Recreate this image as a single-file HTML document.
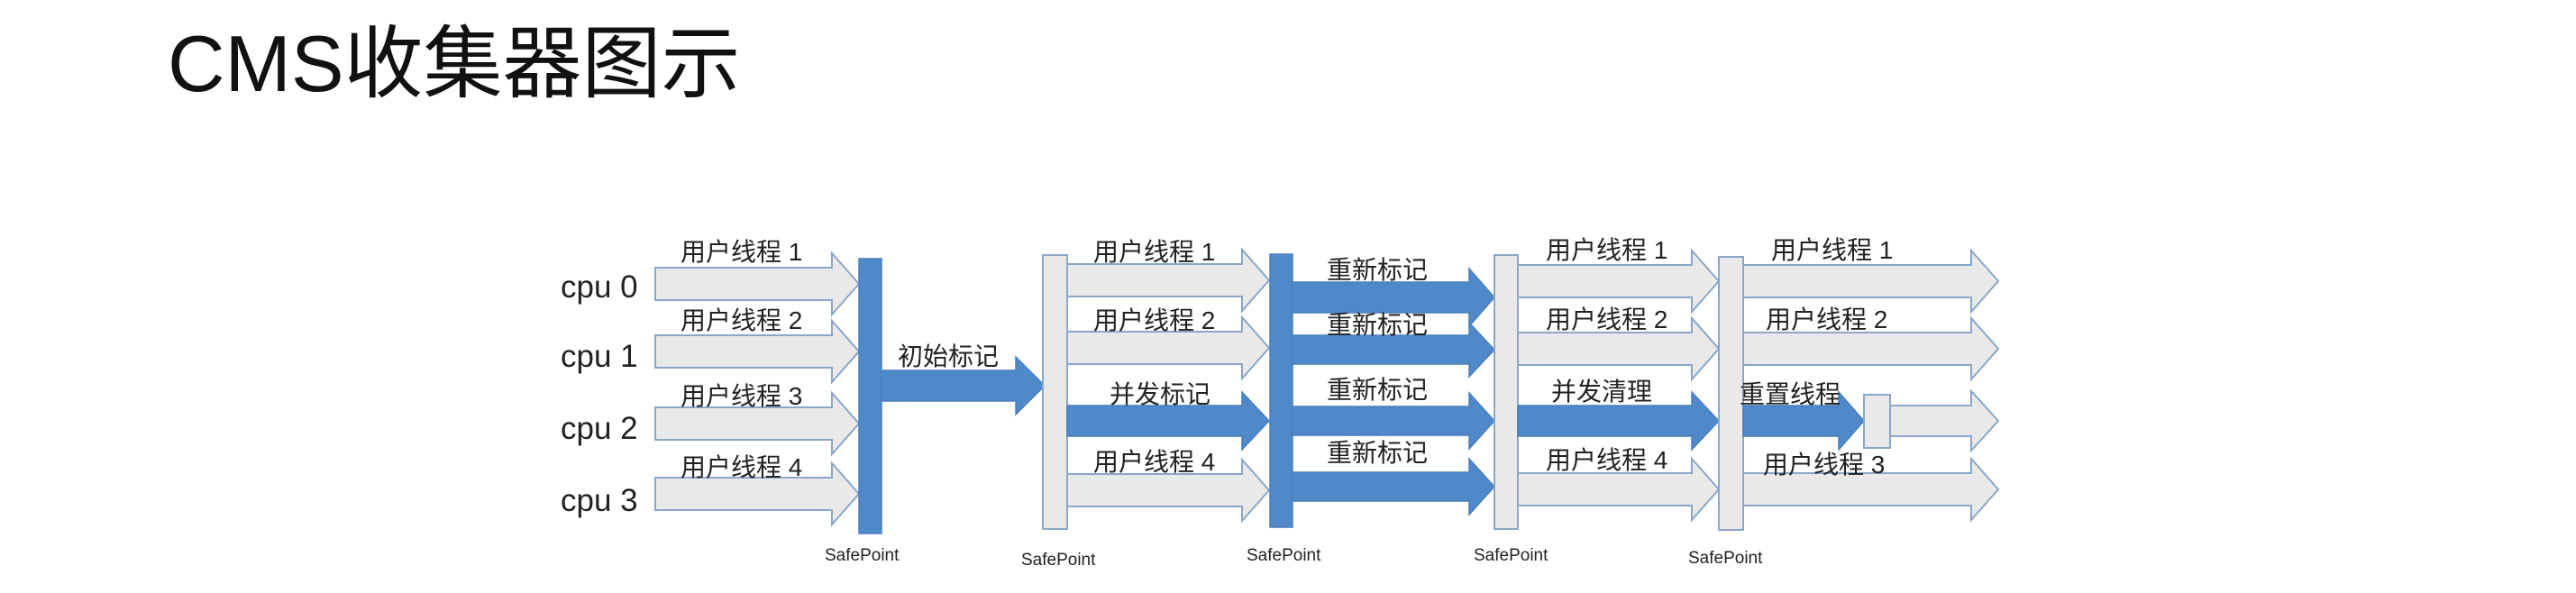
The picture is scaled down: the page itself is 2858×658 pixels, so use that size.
<!DOCTYPE html>
<html><head><meta charset="utf-8"><style>
html,body{margin:0;padding:0;background:#fff;width:2858px;height:658px;overflow:hidden}
svg{display:block}
text{font-family:"Liberation Sans","Noto Sans CJK SC",sans-serif;fill:#222}
</style></head><body>
<svg width="2858" height="658" viewBox="0 0 2858 658" xmlns="http://www.w3.org/2000/svg">
<defs><style>
.g{fill:#e9e9e9;stroke:#8aa6c8;stroke-width:2}
.b{fill:#5089c9;stroke:#4a7fbd;stroke-width:1.5}
.l{font-size:28px}
.s{font-size:19px}
.c{font-size:35px}
</style></defs>
<text x="186" y="101" style="font-size:88px;fill:#111">CMS收集器图示</text>

<text class="c" x="622" y="330">cpu 0</text>
<text class="c" x="622" y="407">cpu 1</text>
<text class="c" x="622" y="487">cpu 2</text>
<text class="c" x="622" y="567">cpu 3</text>

<!-- col1 -->
<polygon class="g" points="727,297 923,297 923,281 953,315 923,349 923,333 727,333"/>
<polygon class="g" points="727,372 923,372 923,356 953,390 923,424 923,408 727,408"/>
<polygon class="g" points="727,452 923,452 923,436 953,470 923,504 923,488 727,488"/>
<polygon class="g" points="727,530 923,530 923,514 953,548 923,582 923,566 727,566"/>
<text class="l" x="755" y="289">用户线程 1</text>
<text class="l" x="755" y="365">用户线程 2</text>
<text class="l" x="755" y="449">用户线程 3</text>
<text class="l" x="755" y="528">用户线程 4</text>
<rect class="b" x="953" y="287" width="25" height="305"/>

<!-- init -->
<polygon class="b" points="978,411 1127,411 1127,396 1159,428 1127,460 1127,445 978,445"/>
<text class="l" x="996" y="405">初始标记</text>
<rect class="g" x="1157" y="283" width="27" height="304"/>

<!-- col2 -->
<polygon class="g" points="1184,293 1378,293 1378,277 1408,311 1378,345 1378,329 1184,329"/>
<polygon class="g" points="1184,368 1378,368 1378,352 1408,386 1378,420 1378,404 1184,404"/>
<polygon class="b" points="1184,450 1378,450 1378,435 1408,467 1378,499 1378,484 1184,484"/>
<polygon class="g" points="1184,526 1378,526 1378,510 1408,544 1378,578 1378,562 1184,562"/>
<text class="l" x="1213" y="289">用户线程 1</text>
<text class="l" x="1213" y="365">用户线程 2</text>
<text class="l" x="1231" y="447">并发标记</text>
<text class="l" x="1213" y="522">用户线程 4</text>
<rect class="b" x="1409" y="282" width="25" height="303"/>

<!-- col3 -->
<polygon class="b" points="1434,313 1630,313 1630,298 1658,330 1630,362 1630,347 1434,347"/>
<polygon class="b" points="1434,372 1630,372 1630,358 1658,388 1630,418 1630,404 1434,404"/>
<polygon class="b" points="1434,451 1630,451 1630,436 1658,467 1630,498 1630,483 1434,483"/>
<polygon class="b" points="1434,524 1630,524 1630,509 1658,540 1630,571 1630,556 1434,556"/>
<text class="l" x="1472" y="309">重新标记</text>
<text class="l" x="1472" y="370">重新标记</text>
<text class="l" x="1472" y="442">重新标记</text>
<text class="l" x="1472" y="512">重新标记</text>
<rect class="g" x="1658" y="283" width="26" height="304"/>

<!-- col4 -->
<polygon class="g" points="1684,294 1877,294 1877,278 1907,312 1877,346 1877,330 1684,330"/>
<polygon class="g" points="1684,369 1877,369 1877,353 1907,387 1877,421 1877,405 1684,405"/>
<polygon class="b" points="1684,450 1877,450 1877,435 1907,467 1877,499 1877,484 1684,484"/>
<polygon class="g" points="1684,525 1877,525 1877,509 1907,543 1877,577 1877,561 1684,561"/>
<text class="l" x="1715" y="287">用户线程 1</text>
<text class="l" x="1715" y="364">用户线程 2</text>
<text class="l" x="1721" y="444">并发清理</text>
<text class="l" x="1715" y="520">用户线程 4</text>
<rect class="g" x="1907" y="285" width="27" height="303"/>

<!-- col5 -->
<polygon class="g" points="1934,294 2187,294 2187,278 2217,312 2187,346 2187,330 1934,330"/>
<polygon class="g" points="1934,369 2187,369 2187,353 2217,387 2187,421 2187,405 1934,405"/>
<polygon class="b" points="1934,450 2040,450 2040,435 2068,467 2040,499 2040,484 1934,484"/>
<polygon class="g" points="2097,450 2187,450 2187,434 2217,467 2187,500 2187,484 2097,484"/>
<rect class="g" x="2068" y="438" width="29" height="59"/>
<polygon class="g" points="1934,525 2187,525 2187,509 2217,543 2187,577 2187,561 1934,561"/>
<text class="l" x="1965" y="287">用户线程 1</text>
<text class="l" x="1959" y="364">用户线程 2</text>
<text class="l" x="1930" y="447">重置线程</text>
<text class="l" x="1956" y="525">用户线程 3</text>

<text class="s" x="915" y="622">SafePoint</text>
<text class="s" x="1133" y="627">SafePoint</text>
<text class="s" x="1383" y="622">SafePoint</text>
<text class="s" x="1635" y="622">SafePoint</text>
<text class="s" x="1873" y="625">SafePoint</text>
</svg>
</body></html>
